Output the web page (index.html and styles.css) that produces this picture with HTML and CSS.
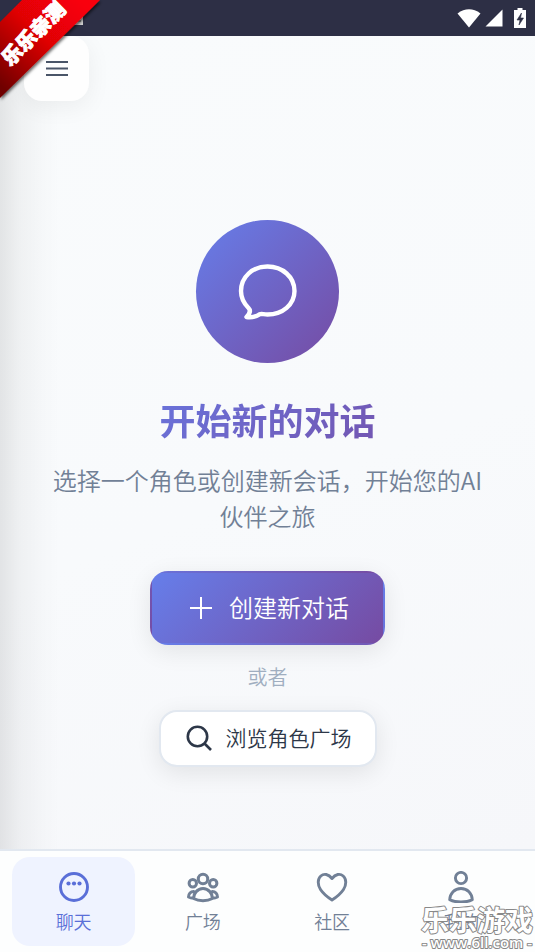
FILE: index.html
```html
<!DOCTYPE html>
<html lang="zh-CN">
<head>
<meta charset="utf-8">
<meta name="viewport" content="width=device-width, initial-scale=1">
<title>开始新的对话</title>
<link rel="stylesheet" href="styles.css">
</head>
<body>
<div class="app">
  <header class="status">
    <svg class="status-note" width="12" height="12" viewBox="0 0 12 12" aria-hidden="true"><path d="M0 3h11v10H0z" fill="#d0d0d0"/><path d="M0 9h9M4 6h5" stroke="#777" stroke-width="1.5"/></svg>
    <svg width="24" height="19" viewBox="0 0 24 19" aria-hidden="true"><path d="M.5 4.5Q12-3.8 23.500 4.500L12 18.500z" fill="#fff"/></svg>
    <svg width="18" height="18" viewBox="0 0 18 18" aria-hidden="true"><path d="M17.500 .5v17H.5z" fill="#fff"/></svg>
    <svg class="battery" width="12" height="20" viewBox="0 0 12 20" aria-hidden="true"><path d="M3.500 0h5v2H12v18H0V2h3.500z" fill="#fff"/><path d="M7.500 5L3 12h3l-1 5 4.500-7H6.500z" fill="#2d2f45" stroke="#2d2f45" stroke-width=".6"/></svg>
  </header>
  <main class="main">
    <button class="menu" aria-label="菜单"><svg width="24" height="18" viewBox="0 0 24 18" aria-hidden="true"><path d="M1 2h22M1 8.500h22M1 15h22" stroke="#4a5568" stroke-width="2"/></svg></button>
    <section class="welcome">
      <div class="hero">
        <svg width="60" height="58" viewBox="0 0 60 58" fill="none" stroke="#fff" stroke-width="4.400" stroke-linejoin="round" aria-hidden="true"><path d="M29.500 4.500C14.500 4.500 3 15 3 29c0 8 3 12.500 7.500 17 2.500 2.500 1 6-2 9 5 .8 9-.2 13-2.700 2-.8 4 .2 8 .2 15 0 27-10 27-23.500C56.500 15 44.500 4.500 29.500 4.500z"/></svg>
      </div>
      <h1 class="title">开始新的对话</h1>
      <p class="desc">选择一个角色或创建新会话，开始您的AI伙伴之旅</p>
      <button class="btn primary"><svg width="22" height="22" viewBox="0 0 22 22" aria-hidden="true"><path d="M11 0v22M0 11h22" stroke="#fff" stroke-width="2"/></svg><span>创建新对话</span></button>
      <p class="or">或者</p>
      <button class="btn secondary"><svg width="26" height="26" viewBox="0 0 26 26" fill="none" stroke="#2d3748" stroke-width="2.600" aria-hidden="true"><circle cx="11.500" cy="11.500" r="9.700"/><path d="M18.500 18.500l6.500 6.500"/></svg><span>浏览角色广场</span></button>
    </section>
  </main>
  <nav class="tabs">
    <a class="tab active" href="#chat"><svg width="32" height="32" viewBox="0 0 32 32" aria-hidden="true"><circle cx="16" cy="16" r="13.500" fill="none" stroke="#5a6fd8" stroke-width="2.900"/><g fill="#5a6fd8"><circle cx="10.500" cy="12.500" r="2.100"/><circle cx="16" cy="12.500" r="2.100"/><circle cx="21.500" cy="12.500" r="2.100"/></g></svg>聊天</a>
    <a class="tab" href="#square"><svg width="32" height="32" viewBox="0 0 32 32" fill="none" stroke="#718096" stroke-width="3" stroke-linejoin="round" aria-hidden="true"><circle cx="16" cy="8" r="4.700"/><circle cx="5.800" cy="12.300" r="3.700"/><circle cx="26.200" cy="12.300" r="3.700"/><path d="M16 17.500c-5.500 0-9.500 5-9.500 10 5.500 3 13.500 3 19 0 0-5-4-10-9.500-10zM7.500 20.500c-4-.5-6 2.500-6 5.500 1.500.8 3 1.200 5 1.300M24.500 20.500c4-.5 6 2.500 6 5.500-1.500.8-3 1.200-5 1.300"/></svg>广场</a>
    <a class="tab" href="#community"><svg width="32" height="32" viewBox="0 0 32 32" fill="none" stroke="#718096" stroke-width="2.900" stroke-linejoin="round" aria-hidden="true"><path d="M16 7.500C12.500 3 8 2.200 4.800 5 1.300 8 1.600 14 4.500 18.500 7.500 23 12 26.500 16 29c4-2.500 8.500-6 11.500-10.500C30.400 14 30.700 8 27.200 5 24 2.200 19.500 3 16 7.500z"/></svg>社区</a>
    <a class="tab" href="#me"><svg width="32" height="32" viewBox="0 0 32 32" fill="none" stroke="#718096" stroke-width="2.900" stroke-linejoin="round" aria-hidden="true"><circle cx="16" cy="7" r="5.600"/><path d="M16 17.500c-6.500 0-11 5-11.300 11.300 6 3 16.600 3 22.600 0C27 22.500 22.500 17.500 16 17.500z"/></svg>我的</a>
  </nav>
  <svg class="ribbon" width="108" height="108" viewBox="0 0 108 108" aria-hidden="true">
    <defs>
      <linearGradient id="red" gradientUnits="userSpaceOnUse" x1="80" y1="0" x2="0" y2="85"><stop offset="0" stop-color="#f90208"/><stop offset=".45" stop-color="#e00206"/><stop offset="1" stop-color="#700003"/></linearGradient>
      <filter id="shade"><feDropShadow dx="1" dy="2" stdDeviation="1.500" flood-opacity=".6"/></filter>
    </defs>
    <path d="M22 0h78L0 98V22z" fill="url(#red)" filter="url(#shade)"/>
    <text class="ribbon-text" x="33" y="41" text-anchor="middle" transform="rotate(-45 33 33)">乐乐亲测</text>
  </svg>
  <svg class="watermark" width="116" height="50" viewBox="0 0 116 50" aria-hidden="true">
    <text class="mark-name" x="58" y="29" text-anchor="middle">乐乐游戏</text>
    <text class="mark-url" x="58" y="46" text-anchor="middle">- www.6ll.com -</text>
  </svg>
</div>
</body>
</html>
```
FILE: styles.css
```css
* { box-sizing: border-box; }
body { margin: 0; font-family: "Noto Sans CJK SC", sans-serif; font-weight: 350; color: #2d3748; }
h1, p { margin: 0; }
button { font: inherit; cursor: pointer; }
svg { display: block; flex: none; }

.app { position: relative; min-height: 100vh; display: flex; flex-direction: column; overflow: hidden; }
.status { height: 36px; background: #2d2f45; display: flex; align-items: center; justify-content: flex-end; gap: 4px; padding: 0 9px 0 72px; }
.status-note { margin-right: auto; overflow: visible; }
.battery { margin-left: 7px; }

.main {
  flex: 1;
  display: flex;
  flex-direction: column;
  padding: 0 24px;
  background:
    linear-gradient(90deg, rgba(0, 0, 0, .09), rgba(0, 0, 0, .04) 20px, rgba(0, 0, 0, .01) 44px, transparent 60px),
    linear-gradient(160deg, #f9fbfc, #f8fafc 55%, #f6f7fa);
}
.menu {
  width: 65px; height: 65px; padding: 0; border: 0; border-radius: 18px;
  background: #fefefe; box-shadow: 0 6px 24px rgba(0, 0, 0, .06);
  display: flex; align-items: center; justify-content: center;
}
.welcome { flex: 1; display: flex; flex-direction: column; align-items: center; justify-content: center; padding-top: 36px; }
.hero {
  width: 143px; height: 143px; border-radius: 50%;
  background: linear-gradient(135deg, #667eea, #764ba2);
  display: flex; align-items: center; justify-content: center;
}
.title {
  width: 100%; max-width: 430px; text-align: center;
  margin-top: 34px; font-size: 36px; line-height: 44px; font-weight: 600;
  background: linear-gradient(135deg, #667eea, #764ba2);
  -webkit-background-clip: text; background-clip: text; color: transparent;
}
.desc { margin-top: 21px; max-width: 440px; text-align: center; font-size: 24px; line-height: 36px; color: #718096; }
.btn { display: flex; align-items: center; justify-content: center; line-height: 36px; }
.btn span { padding-bottom: 2px; }
.primary {
  margin-top: 37px; height: 74px; padding: 0 34px 0 38px; gap: 17px; font-size: 24px; color: #fff;
  border: 2px solid transparent; border-radius: 18px;
  background: linear-gradient(135deg, #667eea, #764ba2);
  box-shadow: 0 6px 24px rgba(0, 0, 0, .09);
}
.or { margin: 16px 0 17px; font-size: 20px; line-height: 32px; color: #a0aec0; }
.secondary {
  height: 57px; padding: 0 23px 0 25px; gap: 14px; font-size: 21px; color: #2d3748;
  border: 2px solid #e2e8f0; border-radius: 18px; background: #fff;
  box-shadow: 0 6px 24px rgba(0, 0, 0, .09);
}

.tabs {
  height: 103px; padding: 6px 12px; border-top: 2px solid #e2e8f0; background: #fdfefe;
  display: grid; grid-template-columns: repeat(4, 1fr); gap: 6px;
}
.tab {
  height: 89px; padding-top: 14px; border-radius: 18px; display: flex; flex-direction: column;
  align-items: center; gap: 5px; font-size: 18px; line-height: 26px; color: #718096; text-decoration: none;
}
.active { background: #eff3ff; color: #5a6fd8; }

.ribbon { position: absolute; left: 0; top: 0; pointer-events: none; }
.ribbon-text { font-size: 20px; font-weight: 900; fill: #fff; stroke: #fff; stroke-width: 1px; }
.watermark { position: absolute; right: 0; bottom: 0; pointer-events: none; }
.mark-name, .mark-url { fill: #fff; stroke: #888; paint-order: stroke; stroke-linejoin: round; }
.mark-name { font-size: 28px; font-weight: 700; stroke-width: 2px; }
.mark-url { font-family: "Open Sans", sans-serif; font-size: 15px; font-weight: 600; stroke-width: 2px; }
```
